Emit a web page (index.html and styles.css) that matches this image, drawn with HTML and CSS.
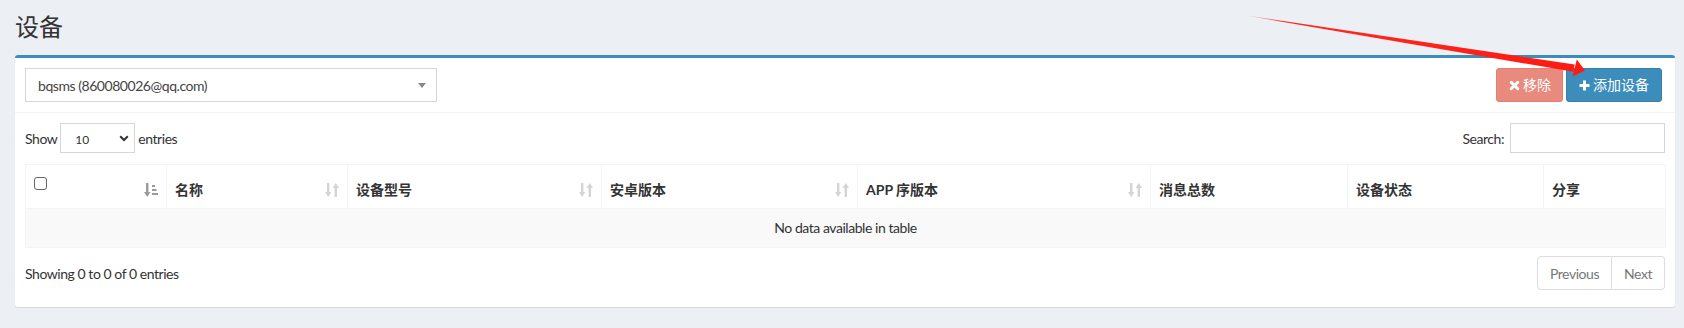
FILE: index.html
```html
<!DOCTYPE html>
<html lang="zh-CN">
<head>
<meta charset="utf-8">
<title>设备</title>
<link rel="stylesheet" href="styles.css">
</head>
<body>
<div class="page">
  <header class="content-header"><h1>设备</h1></header>
  <section class="box">
    <div class="box-header">
      <div class="user-select">
        <span class="user-select-text latin">bqsms (860080026@qq.com)</span>
        <span class="caret"></span>
      </div>
      <div class="actions">
        <button class="btn btn-danger" type="button">
          <svg class="ico" viewBox="0 0 12 12" width="11" height="11"><path d="M2.4 2.4L9.6 9.6M9.6 2.4L2.4 9.6" stroke="#fff" stroke-width="3.2" stroke-linecap="round"/></svg>
          <span>移除</span>
        </button>
        <button class="btn btn-primary" type="button">
          <svg class="ico" viewBox="0 0 11 11" width="11" height="11"><path d="M5.5 0.5V10.5M0.5 5.5H10.5" stroke="#fff" stroke-width="3"/></svg>
          <span>添加设备</span>
        </button>
      </div>
    </div>
    <div class="box-body">
      <div class="dt-top">
        <div class="dt-length latin">
          <span>Show</span>
          <span class="length-select"><span class="length-value">10</span><svg viewBox="0 0 10 7" width="10" height="7"><path d="M1.2 1.2L5 5L8.8 1.2" fill="none" stroke="#333" stroke-width="2"/></svg></span>
          <span>entries</span>
        </div>
        <label class="dt-search latin">
          <span>Search:</span>
          <input type="search" class="search-input">
        </label>
      </div>
      <table class="dt-table">
        <colgroup>
          <col class="c1"><col class="c2"><col class="c3"><col class="c4"><col class="c5"><col class="c6"><col class="c7"><col class="c8">
        </colgroup>
        <thead>
          <tr>
            <th><div class="th-inner"><span class="checkbox"></span><svg class="sort sort-active" viewBox="0 0 14 14" width="14" height="14"><path d="M2 0h2.4v9h2L3.2 14 0 9h2z"/><rect x="8" y="2" width="3" height="2"/><rect x="8" y="6" width="4.5" height="2"/><rect x="8" y="10" width="6" height="2"/></svg></div></th>
            <th><div class="th-inner"><span>名称</span><svg class="sort" viewBox="0 0 14 14" width="14" height="14"><path d="M2 0h2.4v9h2L3.2 14 0 9h2z M9.6 14V5h-2L10.8 0 14 5h-2v9z"/></svg></div></th>
            <th><div class="th-inner"><span>设备型号</span><svg class="sort" viewBox="0 0 14 14" width="14" height="14"><path d="M2 0h2.4v9h2L3.2 14 0 9h2z M9.6 14V5h-2L10.8 0 14 5h-2v9z"/></svg></div></th>
            <th><div class="th-inner"><span>安卓版本</span><svg class="sort" viewBox="0 0 14 14" width="14" height="14"><path d="M2 0h2.4v9h2L3.2 14 0 9h2z M9.6 14V5h-2L10.8 0 14 5h-2v9z"/></svg></div></th>
            <th><div class="th-inner"><span>APP 序版本</span><svg class="sort" viewBox="0 0 14 14" width="14" height="14"><path d="M2 0h2.4v9h2L3.2 14 0 9h2z M9.6 14V5h-2L10.8 0 14 5h-2v9z"/></svg></div></th>
            <th><div class="th-inner"><span>消息总数</span></div></th>
            <th><div class="th-inner"><span>设备状态</span></div></th>
            <th><div class="th-inner"><span>分享</span></div></th>
          </tr>
        </thead>
        <tbody>
          <tr><td colspan="8" class="empty latin">No data available in table</td></tr>
        </tbody>
      </table>
      <div class="dt-bottom">
        <div class="dt-info latin">Showing 0 to 0 of 0 entries</div>
        <ul class="pagination latin">
          <li class="page-prev">Previous</li>
          <li class="page-next">Next</li>
        </ul>
      </div>
    </div>
  </section>
</div>
<svg class="annotation" viewBox="0 0 1684 328" width="1684" height="328">
  <defs>
    <linearGradient id="tail" x1="1243" y1="15" x2="1575" y2="68" gradientUnits="userSpaceOnUse">
      <stop offset="0" stop-color="#ff2a1f" stop-opacity="0.15"/>
      <stop offset="0.12" stop-color="#ff2a1f" stop-opacity="1"/>
      <stop offset="1" stop-color="#ff1a12"/>
    </linearGradient>
  </defs>
  <polygon points="1243,15 1574.6,64.6 1573.4,71.8" fill="url(#tail)"/>
  <polygon points="1576.8,59.4 1585,70.4 1572.6,76.6" fill="#ff1a12"/>
</svg>
</body>
</html>
```
FILE: styles.css
```css
* { box-sizing: border-box; }
html, body { margin: 0; padding: 0; }
body {
  background: #ecf0f5;
  font-family: "Lato", "Noto Sans CJK SC", sans-serif;
  font-size: 14px;
  color: #333;
  width: 1684px;
  height: 328px;
  overflow: hidden;
  position: relative;
}
.latin { letter-spacing: -0.45px; }
.content-header { padding: 13px 15px 0; }
.content-header h1 {
  margin: 0;
  font-family: "Noto Sans CJK SC", sans-serif;
  font-size: 24px;
  line-height: 26px;
  font-weight: 400;
  color: #333;
}
.box {
  margin: 16px 9px 0 15px;
  background: #fff;
  border-top: 3px solid #3c8dbc;
  border-radius: 3px;
  box-shadow: 0 1px 1px rgba(0,0,0,0.1);
}
.box-header {
  display: flex;
  justify-content: space-between;
  align-items: center;
  padding: 10px 13px 10px 10px;
  border-bottom: 1px solid #f4f4f4;
}
.user-select {
  width: 412px;
  height: 34px;
  border: 1px solid #d2d6de;
  display: flex;
  align-items: center;
  justify-content: space-between;
  padding: 0 10px 0 12px;
  color: #444;
}
.caret {
  width: 0; height: 0;
  border-top: 5px solid #888;
  border-left: 4px solid transparent;
  border-right: 4px solid transparent;
}
.actions { display: flex; gap: 3px; }
.btn {
  height: 34px;
  display: inline-flex;
  align-items: center;
  gap: 3px;
  padding: 0 11px 0 12px;
  border: 1px solid;
  border-radius: 3px;
  color: #fff;
  font-family: "Lato", "Noto Sans CJK SC", sans-serif;
  font-size: 14px;
  line-height: 20px;
  margin: 0;
}
.btn-danger { background: #e98a7e; border-color: #e57e71; }
.btn-primary { background: #3c8dbc; border-color: #367fa9; padding: 0 12px 0 12px; gap: 3px; }
.ico { display: block; flex: none; }

.box-body { padding: 10px; }
.dt-top {
  display: flex;
  justify-content: space-between;
  align-items: center;
  height: 30px;
}
.dt-length { display: flex; align-items: center; gap: 3px; }
.length-select {
  width: 75px;
  height: 30px;
  border: 1px solid #d2d6de;
  display: flex;
  align-items: center;
  justify-content: space-between;
  padding: 2px 5px 0 14px;
  font-size: 12px;
  color: #333;
  letter-spacing: 0;
}
.length-select svg { margin-top: -2px; }
.dt-search { display: flex; align-items: center; gap: 6px; }
.search-input {
  width: 155px;
  height: 30px;
  border: 1px solid #d2d6de;
  border-radius: 0;
  padding: 0 6px;
  margin: 0;
  outline: none;
  font: inherit;
}

.dt-table {
  width: 100%;
  border-collapse: collapse;
  table-layout: fixed;
  margin-top: 11px;
}
.c1 { width: 141px; }
.c2 { width: 181px; }
.c3 { width: 254px; }
.c4 { width: 256px; }
.c5 { width: 293px; }
.c6 { width: 197px; }
.c7 { width: 196px; }
.c8 { width: 122px; }
.dt-table th {
  border: 1px solid #f4f4f4;
  padding: 15px 8px 8px;
  text-align: left;
  font-weight: 700;
  line-height: 20px;
  color: #333;
}
.th-inner {
  display: flex;
  align-items: center;
  justify-content: space-between;
  height: 20px;
}
.checkbox {
  width: 13px;
  height: 13px;
  border: 1px solid #666;
  border-radius: 3px;
  background: #fff;
  align-self: flex-start;
  margin-top: -3px;
}
.sort { display: block; fill: #d4d4d4; flex: none; }
.sort-active { fill: #9a9a9a; }
.dt-table td.empty {
  text-align: center;
  background: #f9f9f9;
  padding: 9px 8px;
  line-height: 20px;
  border: 1px solid #f4f4f4;
  color: #333;
}
.dt-bottom {
  display: flex;
  justify-content: space-between;
  align-items: center;
  margin-top: 8px;
  margin-bottom: 7px;
}
.pagination { display: flex; list-style: none; margin: 0; padding: 0; }
.pagination li {
  height: 34px;
  display: flex;
  align-items: center;
  justify-content: center;
  border: 1px solid #ddd;
  color: #777;
  background: #fff;
}
.page-prev { width: 75px; border-radius: 4px 0 0 4px; }
.page-next { width: 53px; border-left: 0 !important; border-radius: 0 4px 4px 0; }
.annotation { position: absolute; left: 0; top: 0; pointer-events: none; }
```
